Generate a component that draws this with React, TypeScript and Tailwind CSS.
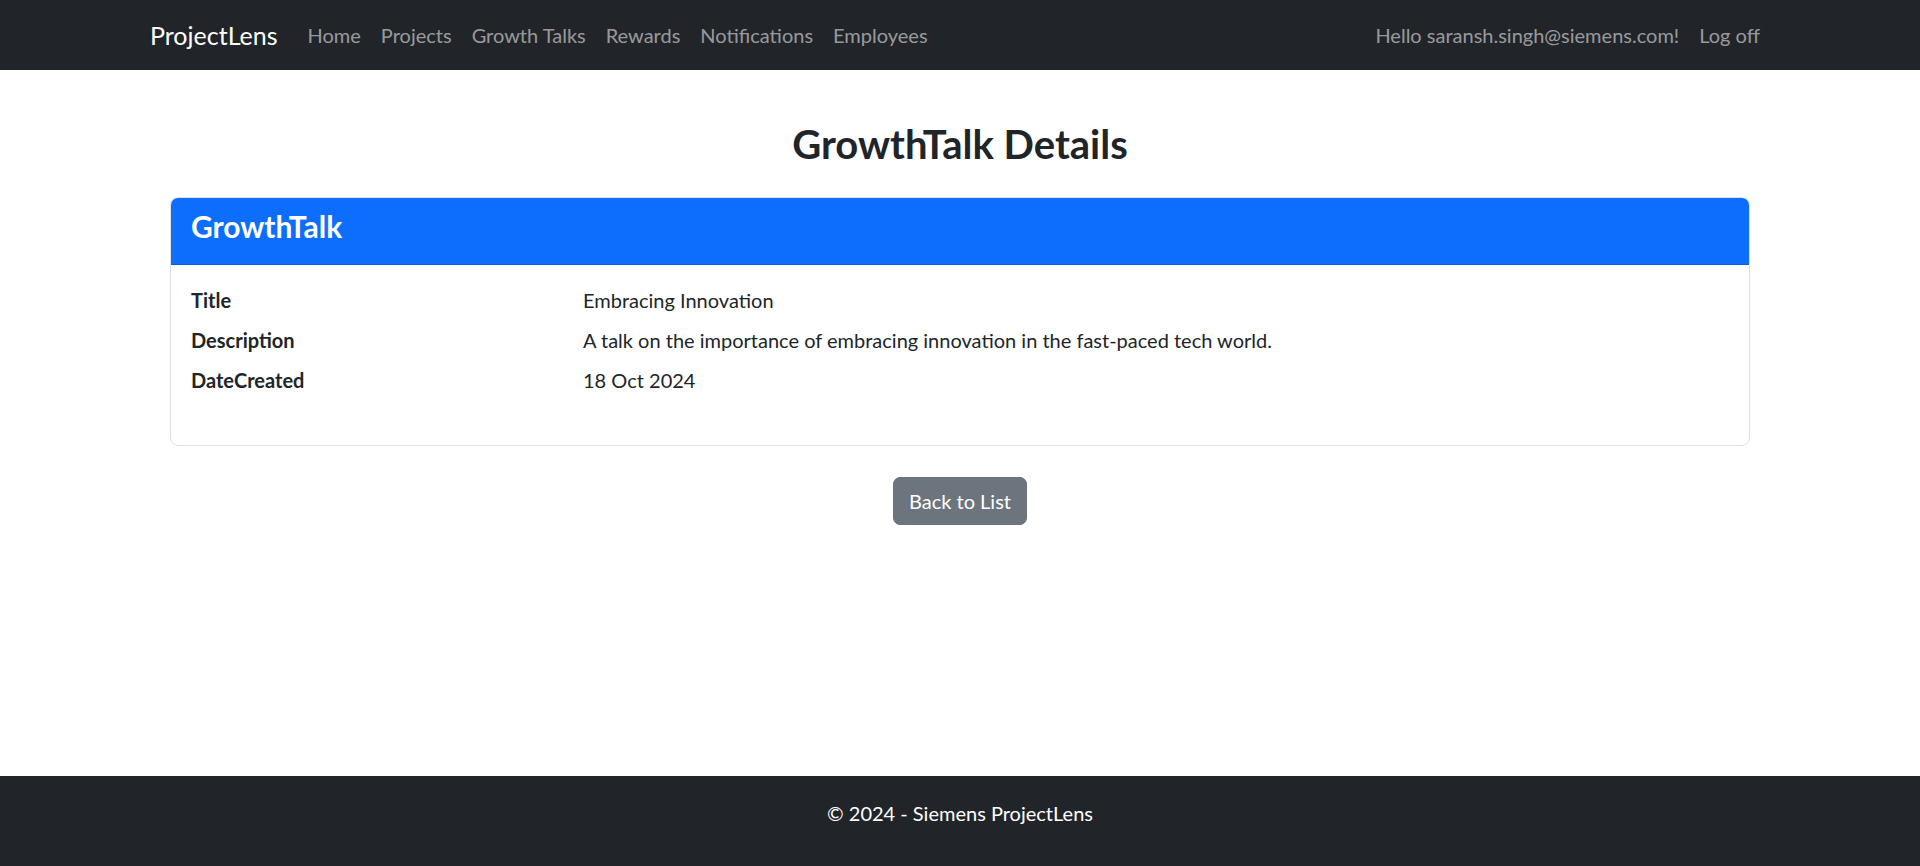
import React from "react";

const font = { fontFamily: "Lato, 'Liberation Sans', sans-serif" };

const navLinks = ["Home", "Projects", "Growth Talks", "Rewards", "Notifications", "Employees"];

const details = [
  { label: "Title", value: "Embracing Innovation" },
  { label: "Description", value: "A talk on the importance of embracing innovation in the fast-paced tech world." },
  { label: "DateCreated", value: "18 Oct 2024" },
];

export default function App() {
  return (
    <div className="min-h-screen flex flex-col bg-white text-[#212529]" style={font}>
      {/* Navbar */}
      <nav className="h-[70px] bg-[#212529] flex items-center">
        <div className="w-[1650px] mx-auto px-[15px] flex items-center justify-between">
          <div className="flex items-center">
            <a className="text-[25px] text-white mr-[20px] leading-[37px]">ProjectLens</a>
            <ul className="flex items-center">
              {navLinks.map((link) => (
                <li key={link}>
                  <a className="px-[10px] text-[20px] text-[#ffffff8c] leading-[30px]">{link}</a>
                </li>
              ))}
            </ul>
          </div>
          <ul className="flex items-center">
            <li>
              <a className="px-[10px] text-[20px] text-[#ffffff8c] leading-[30px]">Hello saransh.singh@siemens.com!</a>
            </li>
            <li>
              <a className="px-[10px] text-[20px] text-[#ffffff8c] leading-[30px]">Log off</a>
            </li>
          </ul>
        </div>
      </nav>

      {/* Main */}
      <main className="flex-1 pt-[50px]">
        <h2 className="text-center text-[40px] font-bold leading-[48px]">GrowthTalk Details</h2>

        <div className="w-[1580px] mx-auto mt-[29px] border border-[#dee2e6] rounded-[8px] overflow-hidden">
          <div className="bg-[#0d6efd] text-white px-[20px] pt-[10px] pb-[10px] border-b border-[#0b5ed7]">
            <h4 className="text-[30px] font-bold leading-[36px] mb-[10px]">GrowthTalk</h4>
          </div>
          <div className="p-[20px]">
            <dl className="flex flex-col gap-[10px] pb-[30px]">
              {details.map((d) => (
                <div key={d.label} className="flex text-[20px] leading-[30px]">
                  <dt className="w-[392px] font-bold">{d.label}</dt>
                  <dd className="flex-1">{d.value}</dd>
                </div>
              ))}
            </dl>
          </div>
        </div>

        <div className="flex justify-center mt-[31px]">
          <button className="bg-[#6c757d] text-white text-[20px] leading-[30px] px-[15px] py-[8px] rounded-[7px] border border-[#6c757d]">
            Back to List
          </button>
        </div>
      </main>

      {/* Footer */}
      <footer className="h-[90px] bg-[#212529] text-white text-center pt-[22px]">
        <p className="text-[20px] leading-[30px]">© 2024 - Siemens ProjectLens</p>
      </footer>
    </div>
  );
}
